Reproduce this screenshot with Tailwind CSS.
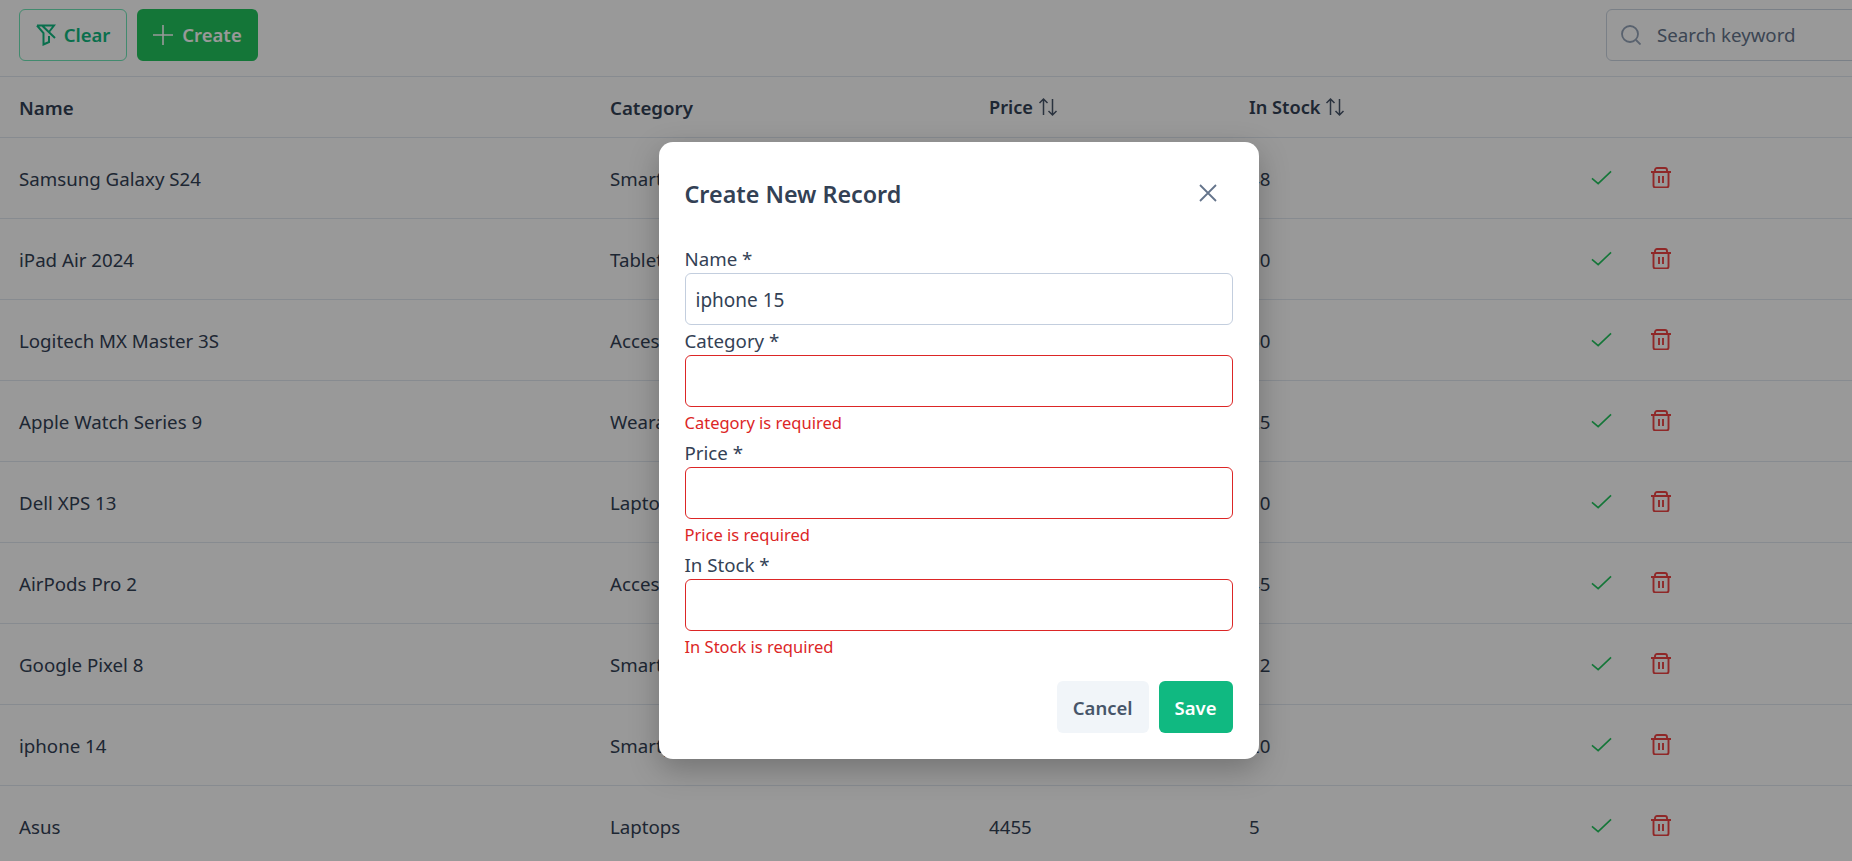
<!DOCTYPE html>
<html lang="en">
  <head>
    <meta charset="UTF-8" />
    <title>Products</title>
    <script src="https://cdn.jsdelivr.net/npm/@tailwindcss/browser@4"></script>
  </head>
  <body class="h-[861px] overflow-hidden bg-white font-['Noto_Sans',sans-serif] text-[18.7px] text-[#334155]">
    <div class="relative w-[1917px] h-[861px] overflow-hidden">
      <!-- Toolbar -->
      <div class="flex items-center justify-between h-[77px] px-[19px] pb-[6px] border-b border-[#e2e8f0]">
        <div class="flex gap-[10px]">
          <button class="flex items-center gap-[8px] h-[52px] w-[108px] justify-center rounded-[6px] border border-[#6ee7b7] text-[#10b981] text-[18.5px] font-semibold">
            <svg width="20" height="22" viewBox="0 0 20 22" fill="none" stroke="currentColor" stroke-width="2"><path d="M1 1.5H18L13 8M1 1.5L7.5 9V20.5L13 18V12M6 1.5L19 14" /></svg>
            <span>Clear</span>
          </button>
          <button class="flex items-center gap-[9px] h-[52px] w-[121px] justify-center rounded-[6px] bg-[#22c55e] text-white text-[18.5px] font-semibold">
            <svg width="20" height="20" viewBox="0 0 20 20" fill="none" stroke="currentColor" stroke-width="1.6"><path d="M10 0V20M0 10H20" /></svg>
            <span>Create</span>
          </button>
        </div>
        <div class="flex items-center gap-[16px] w-[292px] h-[52px] px-[14px] rounded-[6px] border border-[#cbd5e1] text-[#64748b]">
          <svg width="20" height="20" viewBox="0 0 20 20" fill="none" stroke="#94a3b8" stroke-width="1.8"><circle cx="9" cy="9" r="8"/><path d="M15 15L19.5 19.5"/></svg>
          <span>Search keyword</span>
        </div>
      </div>

      <!-- Table -->
      <table class="w-full table-fixed border-collapse text-left">
        <colgroup>
          <col class="w-[610px]" />
          <col class="w-[379px]" />
          <col class="w-[260px]" />
          <col class="w-[341px]" />
          <col />
        </colgroup>
        <thead>
          <tr class="h-[60px] border-b border-[#e2e8f0]">
            <th class="pl-[19px] pt-[2px] font-semibold">Name</th>
            <th class="pt-[2px] font-semibold">Category</th>
            <th class="font-semibold"><span class="flex items-center gap-[5px] text-[18.2px]"><span class="pt-[2px]">Price</span> <svg width="20" height="20" viewBox="0 0 20 20" fill="none" stroke="#475569" stroke-width="1.5"><path d="M5.5 18V2M1.5 6L5.5 2L9.5 6M14.5 2V18M10.5 14L14.5 18L18.5 14"/></svg></span></th>
            <th class="font-semibold"><span class="flex items-center gap-[4px] text-[18.2px]"><span class="pt-[2px]">In Stock</span> <svg width="20" height="20" viewBox="0 0 20 20" fill="none" stroke="#475569" stroke-width="1.5"><path d="M5.5 18V2M1.5 6L5.5 2L9.5 6M14.5 2V18M10.5 14L14.5 18L18.5 14"/></svg></span></th>
            <th></th>
          </tr>
        </thead>
        <tbody>
          <tr class="h-[81px] border-b border-[#e2e8f0]"><td class="pl-[19px] pt-[3px]">Samsung Galaxy S24</td><td class="pt-[3px]">Smartphones</td><td class="pt-[3px]">899</td><td class="pt-[3px]">48</td><td><span class="flex items-center gap-[39px]"><svg class="ml-[1px]" width="21" height="15" viewBox="0 0 22 15" fill="none" stroke="#22c55e" stroke-width="1.7"><path d="M1 8.5L7.5 14L21 1"/></svg><svg width="20" height="21" viewBox="0 0 20 21" fill="none" stroke="#ef4444" stroke-width="1.9"><path d="M0 5H20M2.5 5V18.5C2.5 19.5 3.5 20.5 4.5 20.5H15.5C16.5 20.5 17.5 19.5 17.5 18.5V5M4 5V3C4 2 5 1 6 1H14C15 1 16 2 16 3V5M8 9V16M12 9V16"/></svg></span></td></tr>
          <tr class="h-[81px] border-b border-[#e2e8f0]"><td class="pl-[19px] pt-[3px]">iPad Air 2024</td><td class="pt-[3px]">Tablets</td><td class="pt-[3px]">599</td><td class="pt-[3px]">30</td><td><span class="flex items-center gap-[39px]"><svg class="ml-[1px]" width="21" height="15" viewBox="0 0 22 15" fill="none" stroke="#22c55e" stroke-width="1.7"><path d="M1 8.5L7.5 14L21 1"/></svg><svg width="20" height="21" viewBox="0 0 20 21" fill="none" stroke="#ef4444" stroke-width="1.9"><path d="M0 5H20M2.5 5V18.5C2.5 19.5 3.5 20.5 4.5 20.5H15.5C16.5 20.5 17.5 19.5 17.5 18.5V5M4 5V3C4 2 5 1 6 1H14C15 1 16 2 16 3V5M8 9V16M12 9V16"/></svg></span></td></tr>
          <tr class="h-[81px] border-b border-[#e2e8f0]"><td class="pl-[19px] pt-[3px]">Logitech MX Master 3S</td><td class="pt-[3px]">Accessories</td><td class="pt-[3px]">99</td><td class="pt-[3px]">60</td><td><span class="flex items-center gap-[39px]"><svg class="ml-[1px]" width="21" height="15" viewBox="0 0 22 15" fill="none" stroke="#22c55e" stroke-width="1.7"><path d="M1 8.5L7.5 14L21 1"/></svg><svg width="20" height="21" viewBox="0 0 20 21" fill="none" stroke="#ef4444" stroke-width="1.9"><path d="M0 5H20M2.5 5V18.5C2.5 19.5 3.5 20.5 4.5 20.5H15.5C16.5 20.5 17.5 19.5 17.5 18.5V5M4 5V3C4 2 5 1 6 1H14C15 1 16 2 16 3V5M8 9V16M12 9V16"/></svg></span></td></tr>
          <tr class="h-[81px] border-b border-[#e2e8f0]"><td class="pl-[19px] pt-[3px]">Apple Watch Series 9</td><td class="pt-[3px]">Wearables</td><td class="pt-[3px]">399</td><td class="pt-[3px]">25</td><td><span class="flex items-center gap-[39px]"><svg class="ml-[1px]" width="21" height="15" viewBox="0 0 22 15" fill="none" stroke="#22c55e" stroke-width="1.7"><path d="M1 8.5L7.5 14L21 1"/></svg><svg width="20" height="21" viewBox="0 0 20 21" fill="none" stroke="#ef4444" stroke-width="1.9"><path d="M0 5H20M2.5 5V18.5C2.5 19.5 3.5 20.5 4.5 20.5H15.5C16.5 20.5 17.5 19.5 17.5 18.5V5M4 5V3C4 2 5 1 6 1H14C15 1 16 2 16 3V5M8 9V16M12 9V16"/></svg></span></td></tr>
          <tr class="h-[81px] border-b border-[#e2e8f0]"><td class="pl-[19px] pt-[3px]">Dell XPS 13</td><td class="pt-[3px]">Laptops</td><td class="pt-[3px]">999</td><td class="pt-[3px]">10</td><td><span class="flex items-center gap-[39px]"><svg class="ml-[1px]" width="21" height="15" viewBox="0 0 22 15" fill="none" stroke="#22c55e" stroke-width="1.7"><path d="M1 8.5L7.5 14L21 1"/></svg><svg width="20" height="21" viewBox="0 0 20 21" fill="none" stroke="#ef4444" stroke-width="1.9"><path d="M0 5H20M2.5 5V18.5C2.5 19.5 3.5 20.5 4.5 20.5H15.5C16.5 20.5 17.5 19.5 17.5 18.5V5M4 5V3C4 2 5 1 6 1H14C15 1 16 2 16 3V5M8 9V16M12 9V16"/></svg></span></td></tr>
          <tr class="h-[81px] border-b border-[#e2e8f0]"><td class="pl-[19px] pt-[3px]">AirPods Pro 2</td><td class="pt-[3px]">Accessories</td><td class="pt-[3px]">249</td><td class="pt-[3px]">45</td><td><span class="flex items-center gap-[39px]"><svg class="ml-[1px]" width="21" height="15" viewBox="0 0 22 15" fill="none" stroke="#22c55e" stroke-width="1.7"><path d="M1 8.5L7.5 14L21 1"/></svg><svg width="20" height="21" viewBox="0 0 20 21" fill="none" stroke="#ef4444" stroke-width="1.9"><path d="M0 5H20M2.5 5V18.5C2.5 19.5 3.5 20.5 4.5 20.5H15.5C16.5 20.5 17.5 19.5 17.5 18.5V5M4 5V3C4 2 5 1 6 1H14C15 1 16 2 16 3V5M8 9V16M12 9V16"/></svg></span></td></tr>
          <tr class="h-[81px] border-b border-[#e2e8f0]"><td class="pl-[19px] pt-[3px]">Google Pixel 8</td><td class="pt-[3px]">Smartphones</td><td class="pt-[3px]">699</td><td class="pt-[3px]">12</td><td><span class="flex items-center gap-[39px]"><svg class="ml-[1px]" width="21" height="15" viewBox="0 0 22 15" fill="none" stroke="#22c55e" stroke-width="1.7"><path d="M1 8.5L7.5 14L21 1"/></svg><svg width="20" height="21" viewBox="0 0 20 21" fill="none" stroke="#ef4444" stroke-width="1.9"><path d="M0 5H20M2.5 5V18.5C2.5 19.5 3.5 20.5 4.5 20.5H15.5C16.5 20.5 17.5 19.5 17.5 18.5V5M4 5V3C4 2 5 1 6 1H14C15 1 16 2 16 3V5M8 9V16M12 9V16"/></svg></span></td></tr>
          <tr class="h-[81px] border-b border-[#e2e8f0]"><td class="pl-[19px] pt-[3px]">iphone 14</td><td class="pt-[3px]">Smartphones</td><td class="pt-[3px]">799</td><td class="pt-[3px]">20</td><td><span class="flex items-center gap-[39px]"><svg class="ml-[1px]" width="21" height="15" viewBox="0 0 22 15" fill="none" stroke="#22c55e" stroke-width="1.7"><path d="M1 8.5L7.5 14L21 1"/></svg><svg width="20" height="21" viewBox="0 0 20 21" fill="none" stroke="#ef4444" stroke-width="1.9"><path d="M0 5H20M2.5 5V18.5C2.5 19.5 3.5 20.5 4.5 20.5H15.5C16.5 20.5 17.5 19.5 17.5 18.5V5M4 5V3C4 2 5 1 6 1H14C15 1 16 2 16 3V5M8 9V16M12 9V16"/></svg></span></td></tr>
          <tr class="h-[81px] border-b border-[#e2e8f0]"><td class="pl-[19px] pt-[3px]">Asus</td><td class="pt-[3px]">Laptops</td><td class="pt-[3px]">4455</td><td class="pt-[3px]">5</td><td><span class="flex items-center gap-[39px]"><svg class="ml-[1px]" width="21" height="15" viewBox="0 0 22 15" fill="none" stroke="#22c55e" stroke-width="1.7"><path d="M1 8.5L7.5 14L21 1"/></svg><svg width="20" height="21" viewBox="0 0 20 21" fill="none" stroke="#ef4444" stroke-width="1.9"><path d="M0 5H20M2.5 5V18.5C2.5 19.5 3.5 20.5 4.5 20.5H15.5C16.5 20.5 17.5 19.5 17.5 18.5V5M4 5V3C4 2 5 1 6 1H14C15 1 16 2 16 3V5M8 9V16M12 9V16"/></svg></span></td></tr>
        </tbody>
      </table>

      <!-- Dialog -->
      <div class="absolute inset-0 flex justify-center items-start pt-[142px] bg-black/40">
        <div class="w-[600px] h-[617px] px-[26px] pt-[26px] rounded-[14px] bg-white shadow-[0_10px_30px_rgba(0,0,0,0.25)]">
          <div class="flex items-center justify-between h-[50px] mb-[25px]">
            <h2 class="pt-[2px] text-[23.3px] font-semibold">Create New Record</h2>
            <svg class="mr-[16px]" width="18" height="18" viewBox="0 0 18 18" fill="none" stroke="#64748b" stroke-width="1.8"><path d="M1 1L17 17M17 1L1 17"/></svg>
          </div>
          <div class="flex flex-col">
            <label class="h-[30px] leading-[32px]">Name *</label>
            <div class="h-[52px] px-[10px] pt-[2px] flex items-center rounded-[6px] border border-[#c3cede] text-[19px]">iphone 15</div>
            <label class="h-[30px] leading-[32px]">Category *</label>
            <div class="h-[52px] rounded-[6px] border border-[#dc2626]"></div>
            <p class="h-[30px] leading-[32px] text-[16.5px] text-[#dc2626]">Category is required</p>
            <label class="h-[30px] leading-[32px]">Price *</label>
            <div class="h-[52px] rounded-[6px] border border-[#dc2626]"></div>
            <p class="h-[30px] leading-[32px] text-[16.5px] text-[#dc2626]">Price is required</p>
            <label class="h-[30px] leading-[32px]">In Stock *</label>
            <div class="h-[52px] rounded-[6px] border border-[#dc2626]"></div>
            <p class="h-[30px] leading-[32px] text-[16.5px] text-[#dc2626]">In Stock is required</p>
          </div>
          <div class="flex justify-end gap-[10px] mt-[20px] text-[18.5px]">
            <button class="h-[52px] px-[16px] pt-[2px] rounded-[6px] bg-[#f1f5f9] text-[#475569] font-semibold">Cancel</button>
            <button class="h-[52px] px-[16px] pt-[2px] rounded-[6px] bg-[#10b981] text-white font-semibold">Save</button>
          </div>
        </div>
      </div>
    </div>
  </body>
</html>
